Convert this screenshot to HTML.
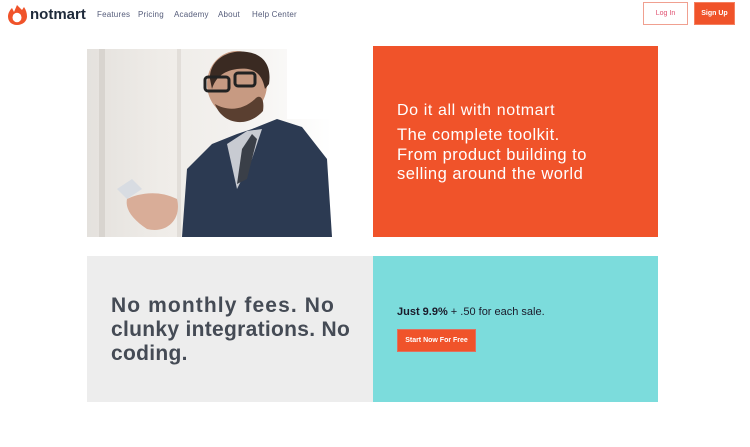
<!DOCTYPE html>
<html><head><meta charset="utf-8"><style>
*{margin:0;padding:0;box-sizing:border-box}
body{width:750px;height:447px;background:#fff;font-family:"Liberation Sans",sans-serif;position:relative;overflow:hidden}
.a{position:absolute}
.nav a{position:absolute;top:10px;font-size:8px;color:#555c7a;letter-spacing:.2px}
</style></head><body>
<svg class="a" style="left:6px;top:4px" width="22" height="22" viewBox="0 0 22 22">
<path d="M11 21C5 21 2 17 2 12.5 2 9 4 6 6 4L8 8 11 1 16 6 18 3C20 6 21 9 21 12.5 21 17 17 21 11 21Z" fill="#f0532a"/>
<ellipse cx="11" cy="13.5" rx="4.5" ry="4.8" fill="#fff"/>
</svg>
<div class="a" style="left:30px;top:6px;font-size:15px;font-weight:bold;color:#1e2a3a">notmart</div>
<div class="nav">
<a style="left:97px">Features</a><a style="left:138px">Pricing</a><a style="left:174px">Academy</a><a style="left:218px">About</a><a style="left:252px">Help Center</a>
</div>
<div class="a" style="left:643px;top:2px;width:45px;height:23px;border:1px solid #f0a090;color:#e05070;font-size:7px;text-align:center;line-height:21px">Log In</div>
<div class="a" style="left:694px;top:2px;width:41px;height:23px;background:#f0532a;border:1px solid #f58060;color:#fff;font-size:7px;font-weight:bold;text-align:center;line-height:21px">Sign Up</div>

<svg class="a" style="left:87px;top:49px" width="245" height="188" viewBox="0 0 245 188">
<defs><linearGradient id="g" x1="0" x2="1"><stop offset="0" stop-color="#e4e1dd"/><stop offset=".3" stop-color="#efece8"/><stop offset=".6" stop-color="#f3f1ee"/><stop offset="1" stop-color="#fff"/></linearGradient></defs>
<rect width="245" height="188" fill="url(#g)"/>
<rect x="12" y="0" width="6" height="188" fill="#d8d4cf"/>
<rect x="90" y="0" width="4" height="188" fill="#e2ded9"/>
<rect x="200" y="0" width="45" height="70" fill="#fff"/>
<path d="M95 188L100 120 125 95 150 85 165 80 190 70 215 78 240 110 245 188Z" fill="#2c3a52"/>
<path d="M140 95L160 82 175 80 165 110 150 140Z" fill="#c8cbd2"/>
<path d="M155 100L165 85 170 90 160 130 150 135Z" fill="#3a3f48"/>
<ellipse cx="150" cy="35" rx="30" ry="33" fill="#c79a82"/>
<path d="M123 30C122 12 140 0 160 3 175 5 185 15 182 35L178 40C175 25 168 18 150 20 135 22 128 30 125 40Z" fill="#3a2a22"/>
<path d="M128 55C135 75 160 80 176 62 178 48 172 45 168 50 155 62 140 62 128 55Z" fill="#5a3f30"/>
<rect x="118" y="28" width="24" height="14" rx="3" fill="none" stroke="#222" stroke-width="3"/>
<rect x="148" y="24" width="20" height="13" rx="3" fill="none" stroke="#222" stroke-width="3"/>
<path d="M30 140L45 130 55 140 40 150Z" fill="#d8dce2"/>
<path d="M40 150C50 145 70 140 90 150 95 170 80 185 60 180 45 170 38 160 40 150Z" fill="#d9ad98"/>
</svg>

<div class="a" style="left:373px;top:46px;width:285px;height:191px;background:#f0532a"></div>
<div class="a" style="left:397px;top:101px;color:#fff;font-size:16px;letter-spacing:.6px;line-height:20px;white-space:nowrap">Do it all with notmart</div>
<div class="a" style="left:397px;top:126px;color:#fff;font-size:16.5px;letter-spacing:.5px;line-height:19.5px;white-space:nowrap">The complete toolkit.<br>From product building to<br>selling around the world</div>

<div class="a" style="left:87px;top:256px;width:286px;height:146px;background:#ededed"></div>
<div class="a" style="left:111px;top:294px;color:#454b55;font-size:21px;letter-spacing:.3px;font-weight:bold;line-height:24px;white-space:nowrap"><span style="letter-spacing:1.1px">No monthly fees. No</span><br>clunky integrations. No<br>coding.</div>

<div class="a" style="left:373px;top:256px;width:285px;height:146px;background:#7cdcdc"></div>
<div class="a" style="left:397px;top:306px;color:#1a1a2a;font-size:11px"><b>Just 9.9%</b> + .50 for each sale.</div>
<div class="a" style="left:397px;top:329px;width:79px;height:23px;background:#f0532a;border:1px solid #e07060;color:#fff;font-size:7px;font-weight:bold;text-align:center;line-height:21px">Start Now For Free</div>
</body></html>
